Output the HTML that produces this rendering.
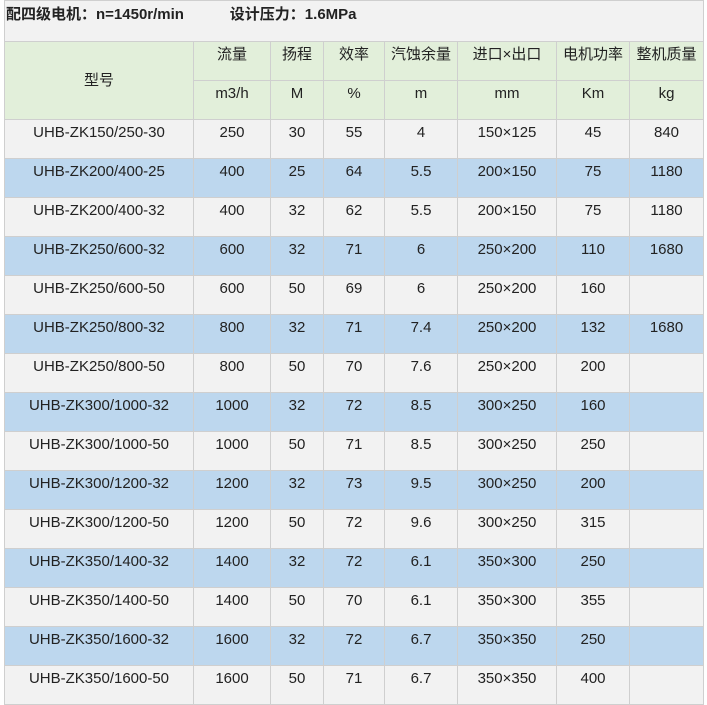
<!DOCTYPE html>
<html><head><meta charset="utf-8"><style>
body{margin:0;background:#fff;width:707px;height:702px;overflow:hidden;position:relative;font-family:"Liberation Sans","Noto Sans CJK SC",sans-serif;font-size:15px;color:#222}
table{position:absolute;left:4px;top:0px;border-collapse:collapse;table-layout:fixed;width:699px}
td{border:1px solid #cfcfcf;background:#f2f2f2;text-align:center;vertical-align:top;padding:3px 0 0 0;height:35px;line-height:20px;white-space:nowrap;overflow:hidden}
tr.b td{background:#bdd7ee}
tr.h td{background:#e2efda;padding-top:3px;height:35px}
td.t{text-align:left;font-weight:bold;height:36px;padding:4px 0 0 1px}
</style></head><body>
<table>
<colgroup><col style="width:189px"><col style="width:77px"><col style="width:53px"><col style="width:61px"><col style="width:73px"><col style="width:99px"><col style="width:73px"><col style="width:74px"></colgroup>
<tr><td class="t" colspan="8">配四级电机：n=1450r/min&nbsp;&nbsp;&nbsp;&nbsp;&nbsp;&nbsp;&nbsp;&nbsp;&nbsp;&nbsp;&nbsp;设计压力：1.6MPa</td></tr>
<tr class="h"><td rowspan="2" style="vertical-align:middle;padding:0">型号</td><td>流量</td><td>扬程</td><td>效率</td><td>汽蚀余量</td><td>进口×出口</td><td>电机功率</td><td>整机质量</td></tr>
<tr class="h"><td>m3/h</td><td>M</td><td>%</td><td>m</td><td>mm</td><td>Km</td><td>kg</td></tr>
<tr><td>UHB-ZK150/250-30</td><td>250</td><td>30</td><td>55</td><td>4</td><td>150×125</td><td>45</td><td>840</td></tr>
<tr class="b"><td>UHB-ZK200/400-25</td><td>400</td><td>25</td><td>64</td><td>5.5</td><td>200×150</td><td>75</td><td>1180</td></tr>
<tr><td>UHB-ZK200/400-32</td><td>400</td><td>32</td><td>62</td><td>5.5</td><td>200×150</td><td>75</td><td>1180</td></tr>
<tr class="b"><td>UHB-ZK250/600-32</td><td>600</td><td>32</td><td>71</td><td>6</td><td>250×200</td><td>110</td><td>1680</td></tr>
<tr><td>UHB-ZK250/600-50</td><td>600</td><td>50</td><td>69</td><td>6</td><td>250×200</td><td>160</td><td></td></tr>
<tr class="b"><td>UHB-ZK250/800-32</td><td>800</td><td>32</td><td>71</td><td>7.4</td><td>250×200</td><td>132</td><td>1680</td></tr>
<tr><td>UHB-ZK250/800-50</td><td>800</td><td>50</td><td>70</td><td>7.6</td><td>250×200</td><td>200</td><td></td></tr>
<tr class="b"><td>UHB-ZK300/1000-32</td><td>1000</td><td>32</td><td>72</td><td>8.5</td><td>300×250</td><td>160</td><td></td></tr>
<tr><td>UHB-ZK300/1000-50</td><td>1000</td><td>50</td><td>71</td><td>8.5</td><td>300×250</td><td>250</td><td></td></tr>
<tr class="b"><td>UHB-ZK300/1200-32</td><td>1200</td><td>32</td><td>73</td><td>9.5</td><td>300×250</td><td>200</td><td></td></tr>
<tr><td>UHB-ZK300/1200-50</td><td>1200</td><td>50</td><td>72</td><td>9.6</td><td>300×250</td><td>315</td><td></td></tr>
<tr class="b"><td>UHB-ZK350/1400-32</td><td>1400</td><td>32</td><td>72</td><td>6.1</td><td>350×300</td><td>250</td><td></td></tr>
<tr><td>UHB-ZK350/1400-50</td><td>1400</td><td>50</td><td>70</td><td>6.1</td><td>350×300</td><td>355</td><td></td></tr>
<tr class="b"><td>UHB-ZK350/1600-32</td><td>1600</td><td>32</td><td>72</td><td>6.7</td><td>350×350</td><td>250</td><td></td></tr>
<tr><td>UHB-ZK350/1600-50</td><td>1600</td><td>50</td><td>71</td><td>6.7</td><td>350×350</td><td>400</td><td></td></tr>
</table>
</body></html>
